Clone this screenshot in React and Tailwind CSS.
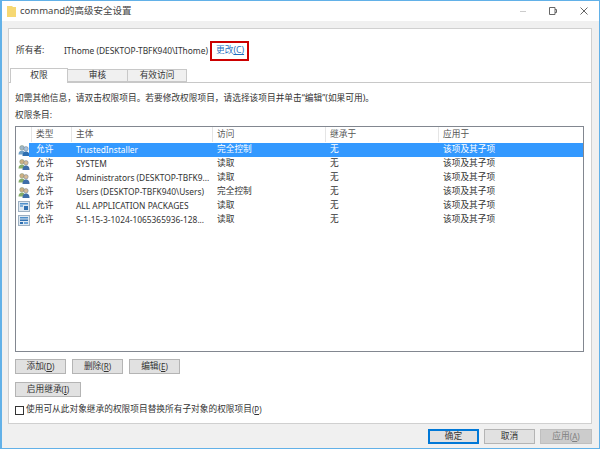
const font = { fontFamily: '"Noto Sans", "Noto Sans CJK SC", sans-serif' };

function UserIcon({ blue }) {
  return (
    <svg width="12" height="11" viewBox="0 0 12 11" className="shrink-0">
      <circle cx="4" cy="2.8" r="2.3" fill={blue ? "#9fb7c9" : "#cdb083"} stroke="#7f9070" strokeWidth="0.5" />
      <path d="M0.5 9.5 C0.5 6.5 2.2 5.5 4 5.5 C5.8 5.5 7 6.5 7 9.5 Z" fill={blue ? "#6fa0c8" : "#86ad6a"} />
      <circle cx="8" cy="3.8" r="2.2" fill={blue ? "#a9c4de" : "#d8bb95"} stroke="#64788f" strokeWidth="0.5" />
      <path d="M4.5 11 C4.5 7.5 6.2 6.5 8 6.5 C9.8 6.5 11.5 7.5 11.5 11 Z" fill={blue ? "#2f6fb0" : "#3f6ea8"} />
    </svg>
  );
}

function PackageIcon({ variant }) {
  return (
    <svg width="12" height="11" viewBox="0 0 12 11" className="shrink-0">
      <rect x="0.5" y="0.5" width="11" height="10" fill="#dfe9f2" stroke="#9db0c2" />
      <rect x="2" y="2" width="8" height="1.5" fill="#4f8fca" />
      {variant === 0 ? (
        <>
          <rect x="2" y="4" width="3" height="2" fill="#7fb0dc" />
          <rect x="6" y="5" width="4" height="4" fill="#2f6fb0" />
        </>
      ) : (
        <>
          <rect x="2" y="4.5" width="8" height="1.5" fill="#2f6fb0" />
          <rect x="2" y="7" width="3" height="2" fill="#2f6fb0" />
          <rect x="6" y="7" width="4" height="2" fill="#6fa5d8" />
        </>
      )}
    </svg>
  );
}

const rows = [
  ["TrustedInstaller", "完全控制", "user-blue"],
  ["SYSTEM", "读取", "user"],
  ["Administrators (DESKTOP-TBFK9...", "读取", "user"],
  ["Users (DESKTOP-TBFK940\\Users)", "完全控制", "user"],
  ["ALL APPLICATION PACKAGES", "读取", "pkg0"],
  ["S-1-15-3-1024-1065365936-128...", "读取", "pkg1"],
];

function Btn({ label, hot, className = "" }) {
  return (
    <div className={`h-[15px] shrink-0 flex items-center justify-center bg-[#e1e1e1] border border-[#b4b4b4] text-[8.7px] leading-none text-[#333] ${className}`}>
      {label}
      {hot && (
        <span className="text-[8px]">
          (<span className="underline">{hot}</span>)
        </span>
      )}
    </div>
  );
}

function Header({ children, className }) {
  return <div className={`flex items-center pl-[4px] shrink-0 border-r border-[#e5e5e5] text-[#555] ${className}`}>{children}</div>;
}

export default function App() {
  return (
    <div style={font} className="w-[600px] h-[449px] flex flex-col bg-[#f0f0f0] border-y border-r border-l-2 border-[#62b1e8] overflow-hidden text-[8.7px] text-[#333]">
      <div className="h-[20px] shrink-0 bg-white flex items-center pl-[5px]">
        <svg width="9" height="11" viewBox="0 0 9 11" className="shrink-0">
          <path d="M0 0 H5 L6 1 H9 V11 H0 Z" fill="#f6d873" />
        </svg>
        <span className="ml-[4px] text-[9.5px] text-[#444]">command的高级安全设置</span>
        <div className="ml-auto flex items-center">
          <span className="w-[6px] h-px bg-[#ccc] mr-[23px]" />
          <svg width="8" height="8" viewBox="0 0 8 8" className="mr-[23px]">
            <path d="M0.5 0.5 H6 V7.5 H0.5 Z M6 2.5 H7.5 V5.5 H6" fill="none" stroke="#666" />
          </svg>
          <svg width="8" height="8" viewBox="0 0 8 8" className="mr-[11px]">
            <path d="M0.5 0.5 L7.5 7.5 M7.5 0.5 L0.5 7.5" stroke="#555" strokeWidth="0.9" />
          </svg>
        </div>
      </div>

      <div className="flex-1 min-h-0 pt-[7px] pl-[6px] pr-[7px] flex flex-col">
        <div className="h-[396px] shrink-0 bg-white border border-[#d0d0d0] flex flex-col">
          <div className="h-[39px] shrink-0 flex items-start pl-[7px] pt-[12px]">
            <div className="flex items-center h-[20px]">
              <span className="w-[48px]">所有者:</span>
              <span className="text-[8.4px] w-[146px] whitespace-nowrap">IThome (DESKTOP-TBFK940\IThome)</span>
              <span className="w-[39px] h-[20px] pl-[4px] flex items-center whitespace-nowrap border-2 border-[#cc0000] text-[#1f6fc0]">
                更改<span className="underline">(C)</span>
              </span>
            </div>
          </div>

          <div className="h-[15px] shrink-0 flex items-end border-b border-[#c8c8c8] pl-[1px]">
            <div className="w-[58px] h-[15px] -mb-px bg-white border border-b-0 border-[#c8c8c8] flex items-center justify-center relative z-10">权限</div>
            <div className="w-[60px] h-[13px] bg-[#f0f0f0] border-y border-r border-[#c8c8c8] flex items-center justify-center">审核</div>
            <div className="w-[59px] h-[13px] bg-[#f0f0f0] border-y border-r border-[#c8c8c8] flex items-center justify-center">有效访问</div>
          </div>

          <div className="flex-1 min-h-0 px-[6px] flex flex-col">
            <div className="mt-[9px] h-[12px] leading-[12px] whitespace-nowrap">如需其他信息，请双击权限项目。若要修改权限项目，请选择该项目并单击“编辑”(如果可用)。</div>
            <div className="mt-[5px] h-[12px] leading-[12px]">权限条目:</div>
            <div className="mt-[5px] h-[226px] w-[569px] shrink-0 border border-[#828790] bg-white flex flex-col">
              <div className="h-[15px] shrink-0 flex">
                <Header className="w-[16px]" />
                <Header className="w-[40px]">类型</Header>
                <Header className="w-[141px]">主体</Header>
                <Header className="w-[113px]">访问</Header>
                <Header className="w-[113px]">继承于</Header>
                <Header className="w-[144px] border-r-0">应用于</Header>
              </div>
              <div className="flex flex-col pt-[1px]">
                {rows.map(([name, access, icon], i) => (
                  <div key={name} className="h-[14px] flex items-center">
                    <div className="w-[13px] pl-[2px] shrink-0 flex items-center">
                      {icon === "pkg0" ? <PackageIcon variant={0} /> : icon === "pkg1" ? <PackageIcon variant={1} /> : <UserIcon blue={icon === "user-blue"} />}
                    </div>
                    <div className={`flex-1 h-full flex items-center ${i === 0 ? "bg-[#3399ff] text-white" : ""}`}>
                      <div className="w-[43px] pl-[7px] shrink-0">允许</div>
                      <div className="w-[141px] pl-[4px] shrink-0 whitespace-nowrap text-[8.4px]">{name}</div>
                      <div className="w-[113px] pl-[4px] shrink-0">{access}</div>
                      <div className="w-[113px] pl-[4px] shrink-0">无</div>
                      <div className="pl-[4px]">该项及其子项</div>
                    </div>
                  </div>
                ))}
              </div>
            </div>
            <div className="mt-[7px] flex gap-[6px]">
              <Btn className="w-[51px]" label="添加" hot="D" />
              <Btn className="w-[51px]" label="删除" hot="R" />
              <Btn className="w-[51px]" label="编辑" hot="E" />
            </div>
            <Btn className="w-[66px] mt-[8px]" label="启用继承" hot="I" />
            <label className="mt-[7px] flex items-center h-[12px] whitespace-nowrap">
              <span className="w-[9px] h-[9px] border border-[#333] bg-white mr-[2px] shrink-0" />
              使用可从此对象继承的权限项目替换所有子对象的权限项目
              <span className="text-[8px]">(<span className="underline">P</span>)</span>
            </label>
          </div>
        </div>
        <div className="flex justify-end gap-[5px] mt-[5px]">
          <Btn className="w-[51px] !border-[#0078d7] border-2" label="确定" />
          <Btn className="w-[51px]" label="取消" />
          <Btn className="w-[52px] !bg-[#cccccc] !border-[#bfbfbf] !text-[#808080]" label="应用" hot="A" />
        </div>
      </div>
    </div>
  );
}
